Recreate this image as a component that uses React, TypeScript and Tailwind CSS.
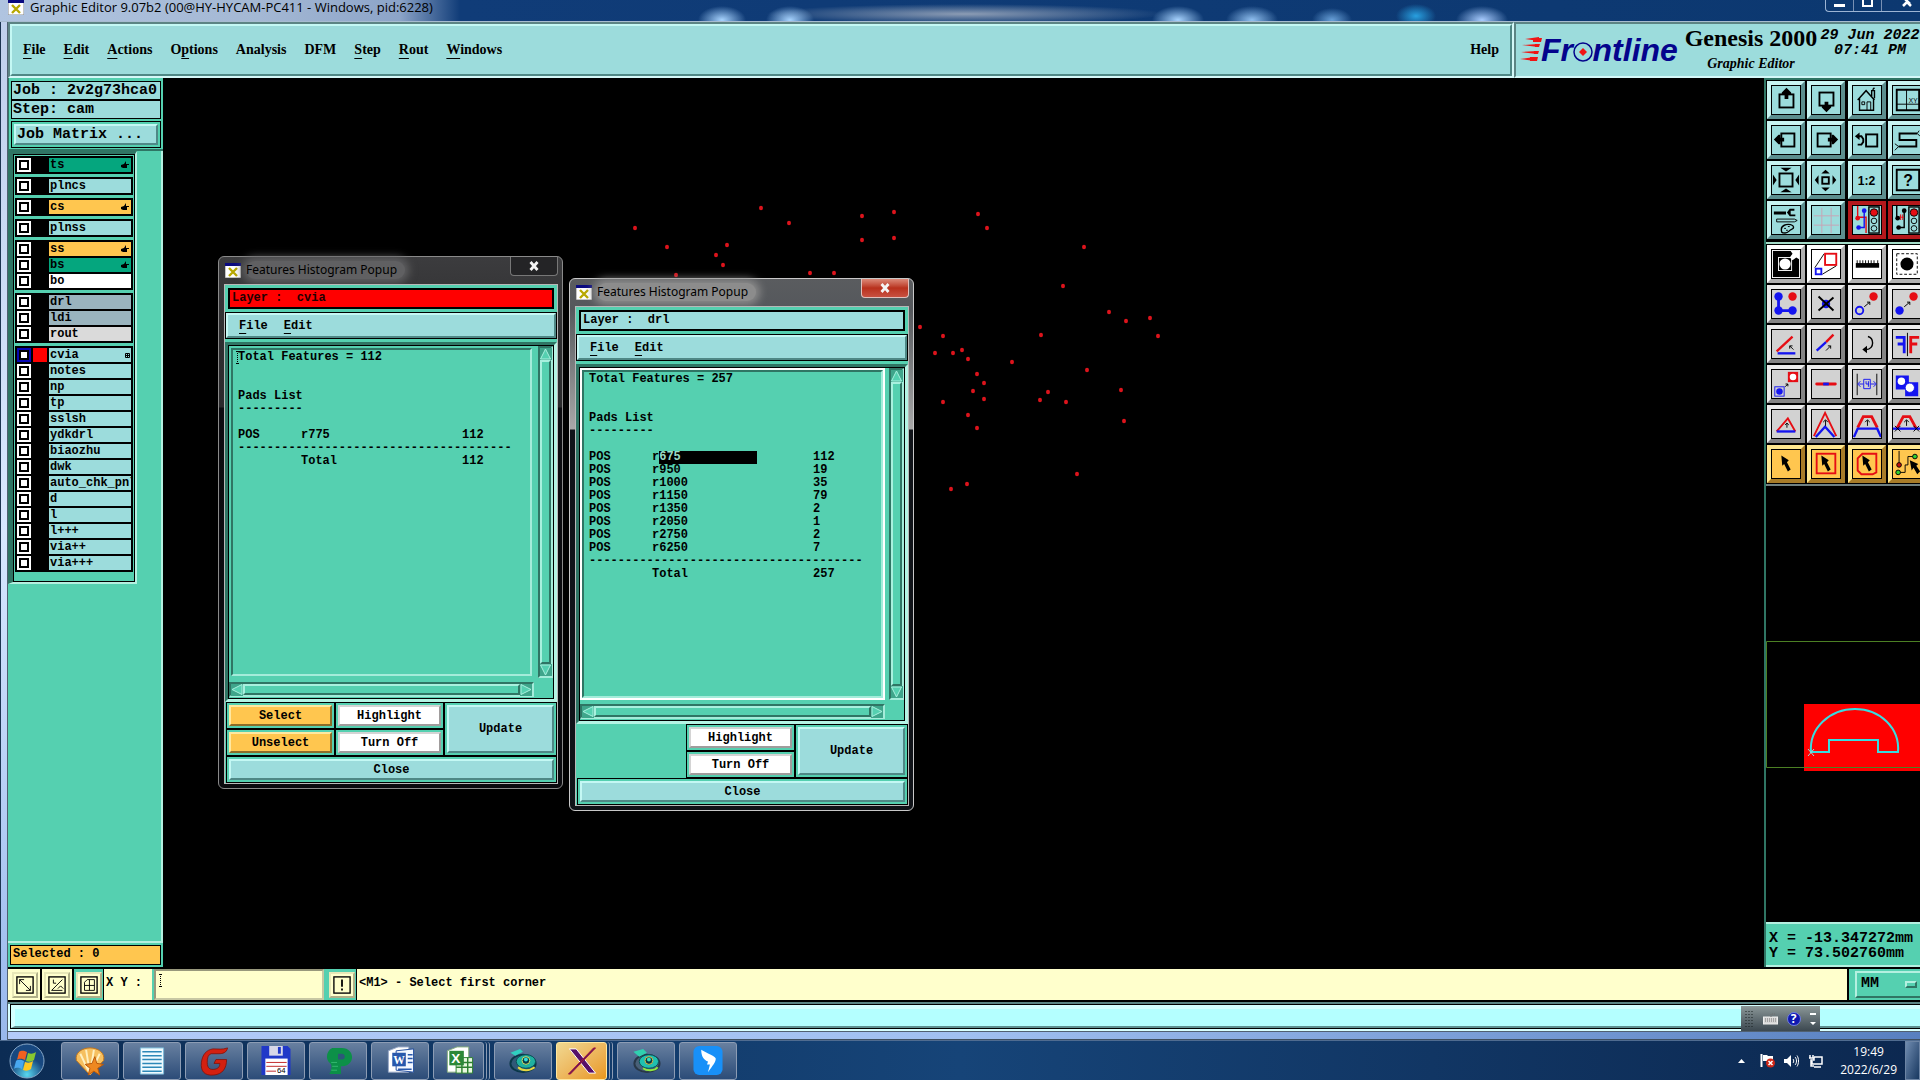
import React from 'react';

const menuItems = [
  { name: 'File', key: 0 },
  { name: 'Edit', key: 0 },
  { name: 'Actions', key: 0 },
  { name: 'Options', key: 1 },
  { name: 'Analysis', key: -1 },
  { name: 'DFM', key: -1 },
  { name: 'Step', key: 0 },
  { name: 'Rout', key: 0 },
  { name: 'Windows', key: 0 },
];

const cyan = 'bg-[#9cdcdc]';
const gold = 'bg-[#ffc64f]';
const green = 'bg-[#05a67e]';

const layerGroups = [
  [{ name: 'ts', color: green, hand: true }],
  [{ name: 'plncs', color: cyan }],
  [{ name: 'cs', color: gold, hand: true }],
  [{ name: 'plnss', color: cyan }],
  [
    { name: 'ss', color: gold, hand: true },
    { name: 'bs', color: green, hand: true },
    { name: 'bo', color: 'bg-white' },
  ],
  [
    { name: 'drl', color: 'bg-[#9ab4be]' },
    { name: 'ldi', color: 'bg-[#9ab4be]' },
    { name: 'rout', color: 'bg-[#dadada]' },
  ],
  [
    { name: 'cvia', color: cyan, active: true },
    { name: 'notes', color: cyan },
    { name: 'np', color: cyan },
    { name: 'tp', color: cyan },
    { name: 'sslsh', color: cyan },
    { name: 'ydkdrl', color: cyan },
    { name: 'biaozhu', color: cyan },
    { name: 'dwk', color: cyan },
    { name: 'auto_chk_pnl', color: cyan },
    { name: 'd', color: cyan },
    { name: 'l', color: cyan },
    { name: 'l+++', color: cyan },
    { name: 'via++', color: cyan },
    { name: 'via+++', color: cyan },
  ],
] as { name: string; color: string; hand?: boolean; active?: boolean }[][];

const pads = [
  [635, 228], [667, 247], [676, 275], [716, 255], [723, 265], [727, 245], [761, 208], [789, 223],
  [810, 273], [834, 273], [862, 216], [862, 240], [894, 212], [894, 238], [978, 214], [987, 228],
  [1084, 247], [1063, 286], [1109, 312], [1126, 321], [1150, 318], [1158, 336], [1041, 335],
  [1012, 362], [920, 327], [943, 336], [935, 353], [953, 353], [962, 350], [968, 359], [977, 374],
  [984, 383], [973, 391], [984, 399], [943, 402], [968, 415], [977, 428], [1087, 370], [1121, 390],
  [1048, 392], [1040, 400], [1066, 402], [1124, 421], [1077, 474], [967, 484], [951, 489],
];

const mono = "font-['Liberation_Mono',monospace]";
const serif = "font-['Liberation_Serif',serif]";
const raised = 'border-2 border-t-[#c4f8f4] border-l-[#c4f8f4] border-b-[#4f8886] border-r-[#4f8886]';

const Key: React.FC<{ text: string; at: number }> = ({ text, at }) =>
  at < 0 ? (
    <>{text}</>
  ) : (
    <>
      {text.slice(0, at)}
      <span className="underline decoration-1 underline-offset-4">{text[at]}</span>
      {text.slice(at + 1)}
    </>
  );

const AppIcon: React.FC = () => (
  <svg className="h-[15px] w-[16px] shrink-0" viewBox="0 0 16 15">
    <rect width="16" height="15" fill="#fff" stroke="#888" />
    <rect width="16" height="3" fill="#0a0a80" />
    <path d="M4 5l8 8M12 5l-8 8" stroke="#b8a800" strokeWidth="2.4" />
  </svg>
);

const Caret: React.FC<{ className: string }> = ({ className }) => (
  <svg className={`absolute h-[13px] w-[3px] ${className}`} viewBox="0 0 3 13">
    <path d="M1.500 0v13" stroke="#000" strokeDasharray="1 1" />
    <path d="M0 .500h3M0 12.500h3" stroke="#000" />
  </svg>
);

const RED = '#e60d14';
const BLUE = '#1414f0';

/* toolbar glyphs, all drawn on a 30x30 grid */
const viewTools: { label: string; art: React.ReactNode; alert?: boolean }[] = [
  {
    label: 'Pan up',
    art: (
      <>
        <rect x="8" y="9" width="15" height="14" fill="none" stroke="#000" strokeWidth="2" />
        <path d="M15.500 2l5 5v2h-3v5h-4v-5h-3v-2z" />
      </>
    ),
  },
  {
    label: 'Pan down',
    art: (
      <>
        <rect x="8" y="7" width="15" height="14" fill="none" stroke="#000" strokeWidth="2" />
        <path d="M15.500 28l-5-5v-2h3v-4h4v4h3v2z" />
      </>
    ),
  },
  {
    label: 'Home',
    art: (
      <g fill="none" stroke="#000" strokeWidth="1.500">
        <path d="M5 15L14 5l9 10M7 13v13h15V13M20 11V5h3v8M21 4l2-2" />
        <path d="M9.500 17h3v3h-3zM15 26v-9h4v9" strokeWidth="1" />
      </g>
    ),
  },
  {
    label: 'Coordinates',
    art: (
      <>
        <path d="M4 4h24v22H4z" fill="none" stroke="#000" strokeWidth="2" />
        <path d="M14.500 4v22M4 19.500h24" stroke="#000" />
        <text x="17" y="18" fontSize="7" fontFamily="Liberation Sans">XY</text>
      </>
    ),
  },
  {
    label: 'Pan left',
    art: (
      <>
        <rect x="10" y="8" width="14" height="14" fill="none" stroke="#000" strokeWidth="2" />
        <path d="M2 14.500l5-5h2v3h4v4h-4v3h-2z" />
      </>
    ),
  },
  {
    label: 'Pan right',
    art: (
      <>
        <rect x="6" y="8" width="14" height="14" fill="none" stroke="#000" strokeWidth="2" />
        <path d="M28 14.500l-5-5h-2v3h-4v4h4v3h2z" />
      </>
    ),
  },
  {
    label: 'Previous view',
    art: (
      <g fill="none" stroke="#000" strokeWidth="2">
        <rect x="14" y="9" width="12" height="13" />
        <path d="M5 11h4l2 3v3l-2 3H5" />
        <path d="M2 11l5-4v8z" fill="#000" stroke="none" />
      </g>
    ),
  },
  {
    label: 'Snake',
    art: (
      <g fill="none" stroke="#000" strokeWidth="2">
        <path d="M26 8H7v7h18v7H6" />
        <path d="M26 8l2-3M26 8l3 3M6 22l-4-3M6 22l-4 4" strokeWidth="1" />
      </g>
    ),
  },
  {
    label: 'Zoom in',
    art: (
      <>
        <rect x="8" y="8" width="14" height="14" fill="none" stroke="#000" strokeWidth="2" />
        <path d="M9 2h12l-6 4zM9 28h12l-6-4zM1 9v12l4-6zM29 9v12l-4-6z" />
      </>
    ),
  },
  {
    label: 'Zoom out',
    art: (
      <>
        <rect x="11" y="12" width="7" height="7" fill="none" stroke="#000" strokeWidth="2" />
        <path d="M10 8h9l-4.500-4zM10 23h9l-4.500 4zM7 10v10l-4-5zM22 10v10l4-5z" />
      </>
    ),
  },
  {
    label: 'Scale one to two',
    art: <text x="5" y="20" fontSize="13" fontFamily="Liberation Sans" fontWeight="bold">1:2</text>,
  },
  {
    label: 'Query',
    art: (
      <>
        <path d="M4 4h24v22H4z" fill="none" stroke="#000" strokeWidth="2" />
        <text x="11" y="21" fontSize="17" fontFamily="Liberation Sans" fontWeight="bold">?</text>
      </>
    ),
  },
  {
    label: 'Setup',
    art: (
      <>
        <path d="M2 6h13v3H2zM16 7l3-4h5v2h-4v4h5v2h-6z" />
        <path d="M5 14h19l3 1.500-3 1.500H5z" fill="none" stroke="#000" />
        <path d="M10 25c0-4 5-6 10-5 4 1 4 4 1 5s-3 4-7 4-4-1-4-4z" fill="none" stroke="#000" strokeWidth="1.500" />
        <path d="M13 24h2M17 22h2M15 26h2" stroke="#000" />
      </>
    ),
  },
  {
    label: 'Grid',
    art: <path d="M10.500 2v27M20.500 2v27M2 10.500h27M2 20.500h27" stroke="#c9a2b4" />,
  },
  {
    label: 'Nets on',
    alert: true,
    art: (
      <>
        <path d="M5 0v12h9v17" fill="none" stroke={RED} strokeWidth="1.500" />
        <path d="M12 5v18H6" fill="none" stroke={BLUE} strokeWidth="1.500" />
        <circle cx="5" cy="13" r="2.500" fill={RED} />
        <circle cx="12" cy="5" r="2.500" fill={BLUE} />
        <circle cx="6" cy="23" r="2.500" fill={BLUE} />
        <rect x="17" y="1" width="11" height="28" fill="none" stroke="#000" strokeWidth="1.500" />
        <circle cx="22.500" cy="7" r="4" fill={RED} stroke="#000" />
        <circle cx="22.500" cy="16" r="3" fill="none" stroke="#000" />
        <circle cx="22.500" cy="24" r="3" fill="none" stroke="#000" />
      </>
    ),
  },
  {
    label: 'Nets off',
    alert: true,
    art: (
      <>
        <path d="M4 0v12M12 5v18H6" fill="none" stroke="#000" strokeWidth="1.500" />
        <path d="M5 12h7M8 9v6M10 9v6" stroke={RED} />
        <circle cx="5" cy="13" r="2.500" />
        <circle cx="12" cy="5" r="2.500" />
        <circle cx="6" cy="23" r="2.500" />
        <rect x="17" y="1" width="11" height="28" fill="none" stroke="#000" strokeWidth="1.500" />
        <circle cx="22.500" cy="7" r="4" fill={RED} stroke="#000" />
        <circle cx="22.500" cy="16" r="3" fill="none" stroke="#000" />
        <circle cx="22.500" cy="24" r="3" fill="none" stroke="#000" />
      </>
    ),
  },
];

const arrowCursor = 'M10 6l8 5-2 2 4 8-3 2-4-8-2 2z';

const editTools: { label: string; art: React.ReactNode }[] = [
  {
    label: 'Zoom area',
    art: (
      <>
        <path d="M1 1h28v28H1z" />
        <rect x="7" y="8" width="14" height="14" fill="none" stroke="#fff" />
        <circle cx="14" cy="15" r="6" fill="#fff" />
        <path d="M19 8l3-4-2-3h9v9l-3-2-4 3z" fill="#fff" />
      </>
    ),
  },
  {
    label: 'Resize',
    art: (
      <>
        <path d="M3 19L13 4M11 26l15-9" stroke="#000" />
        <rect x="14" y="4" width="12" height="12" fill="none" stroke={RED} strokeWidth="2" />
        <rect x="4" y="20" width="6" height="6" fill="none" stroke={BLUE} strokeWidth="2" />
      </>
    ),
  },
  {
    label: 'Measure',
    art: (
      <>
        <path d="M3 14h25v5H3z" />
        <path d="M4.500 11v4M7.500 11v4M10.500 11v4M13.500 11v4M16.500 11v4M19.500 11v4M22.500 11v4M26.500 11v4" stroke="#000" strokeWidth="1" />
      </>
    ),
  },
  {
    label: 'Select feature',
    art: (
      <>
        <rect x="4" y="4" width="22" height="22" fill="none" stroke="#000" strokeDasharray="3 2" />
        <circle cx="15" cy="15" r="7" />
      </>
    ),
  },
  {
    label: 'Add',
    art: (
      <>
        <path d="M7 7v15h16" fill="none" stroke={BLUE} strokeWidth="3" />
        <circle cx="7" cy="7" r="4.500" fill={BLUE} />
        <circle cx="7" cy="22" r="4.500" fill={BLUE} />
        <circle cx="22" cy="22" r="4.500" fill={BLUE} />
        <circle cx="22" cy="7" r="4.500" fill={RED} />
      </>
    ),
  },
  {
    label: 'Delete',
    art: (
      <>
        <circle cx="15" cy="15" r="4.500" fill={BLUE} />
        <path d="M7 7l16 15M23 8L7 22" stroke="#000" strokeWidth="2" />
      </>
    ),
  },
  {
    label: 'Move',
    art: (
      <>
        <circle cx="22" cy="7" r="4.500" fill={RED} />
        <circle cx="7" cy="22" r="4" fill="none" stroke={BLUE} strokeWidth="2" />
        <path d="M12 18l6-5M15 13h3v3" fill="none" stroke="#000" />
      </>
    ),
  },
  {
    label: 'Copy',
    art: (
      <>
        <circle cx="22" cy="7" r="4.500" fill={RED} />
        <circle cx="7" cy="22" r="4.500" fill={BLUE} />
        <path d="M12 18l6-5M15 13h3v3" fill="none" stroke="#000" />
      </>
    ),
  },
  {
    label: 'Rotate',
    art: (
      <>
        <path d="M5 23L22 7" stroke={RED} strokeWidth="2.500" />
        <path d="M6 25h19" stroke={BLUE} strokeWidth="2.500" />
        <path d="M23 21l-4-4M19 20v-3h3" fill="none" stroke="#000" />
      </>
    ),
  },
  {
    label: 'Stretch',
    art: (
      <>
        <path d="M15 13l8-8" stroke={RED} strokeWidth="2.500" />
        <path d="M5 22l10-9" stroke={BLUE} strokeWidth="2.500" />
        <path d="M15 22l5-5M17 17h3v3" fill="none" stroke="#000" />
      </>
    ),
  },
  {
    label: 'Turn',
    art: (
      <>
        <path d="M16 7c4 1 5 4 5 7s-2 7-7 7" fill="none" stroke="#000" strokeWidth="1.500" />
        <path d="M10 21l5-4v8z" />
      </>
    ),
  },
  {
    label: 'Mirror',
    art: (
      <>
        <path d="M3 8h9v17M5 15h7" fill="none" stroke={BLUE} strokeWidth="3" />
        <path d="M28 8h-9v17M26 15h-7" fill="none" stroke={RED} strokeWidth="3" />
        <path d="M15.500 3v25" stroke="#000" />
      </>
    ),
  },
  {
    label: 'Substitute',
    art: (
      <>
        <rect x="17" y="2" width="11" height="11" fill={RED} />
        <circle cx="22.500" cy="7.500" r="3.500" fill="#fff" />
        <rect x="3" y="18" width="10" height="10" fill="none" stroke={BLUE} />
        <circle cx="8" cy="23" r="3.500" fill={BLUE} />
        <path d="M14 18l3-3M14.500 15H17v2.500" fill="none" stroke="#000" />
      </>
    ),
  },
  {
    label: 'Break',
    art: (
      <>
        <path d="M5 15h20" stroke={RED} strokeWidth="3" strokeLinecap="round" />
        <path d="M12 15h6" stroke={BLUE} strokeWidth="3" />
      </>
    ),
  },
  {
    label: 'Spacing',
    art: (
      <>
        <path d="M4.500 4v23M25.500 4v23" stroke="#000" />
        <path d="M11.500 10h7v10h-7zM6 15h5M19 15h5M8 12l-3 3 3 3M22 12l3 3-3 3" fill="none" stroke={BLUE} />
        <path d="M14 12v3h3M16.500 12v6" fill="none" stroke={BLUE} />
      </>
    ),
  },
  {
    label: 'Merge',
    art: (
      <>
        <path d="M3 6h14v7h10v15H13v-7H3z" fill={BLUE} />
        <circle cx="9" cy="12" r="4" fill="#fff" />
        <circle cx="18" cy="19" r="5" fill="#fff" stroke={BLUE} />
      </>
    ),
  },
  {
    label: 'Shift line',
    art: (
      <>
        <path d="M5 23L17 9l8 14" fill="none" stroke={RED} strokeWidth="2" />
        <path d="M5 23h20" stroke={BLUE} strokeWidth="2.500" />
        <path d="M16 19v-5M14 16l2-2 2 2" fill="none" stroke="#000" />
      </>
    ),
  },
  {
    label: 'Shift corner',
    art: (
      <>
        <path d="M2 28L14 3l12 25" fill="none" stroke={RED} strokeWidth="2" />
        <path d="M4 29l10-11 10 11" fill="none" stroke={BLUE} strokeWidth="2.500" />
        <path d="M14.500 17v-6M12 13l2.500-2.500 2.500 2.500" fill="none" stroke="#000" />
      </>
    ),
  },
  {
    label: 'Shift segment',
    art: (
      <>
        <path d="M5 19l6-12h9l6 12" fill="none" stroke={RED} strokeWidth="3" />
        <path d="M1 29l4-9h21l4 9" fill="none" stroke={BLUE} strokeWidth="2.500" />
        <path d="M15.500 17v-6M13 13l2.500-2.500 2.500 2.500" fill="none" stroke="#000" />
      </>
    ),
  },
  {
    label: 'Shift and cut',
    art: (
      <>
        <path d="M4 20l7-13h7l7 13" fill="none" stroke={RED} strokeWidth="3" />
        <path d="M0 20h30" stroke={BLUE} strokeWidth="2.500" />
        <path d="M2 17l6 6M8 17l-6 6M22 17l6 6M28 17l-6 6M14.500 17v-6M12 13l2.500-2.500 2.500 2.500" fill="none" stroke="#000" />
      </>
    ),
  },
];

const selectTools: { label: string; art: React.ReactNode }[] = [
  { label: 'Select', art: <path d={arrowCursor} /> },
  {
    label: 'Select in rectangle',
    art: (
      <>
        <rect x="5" y="4" width="20" height="21" fill="none" stroke={RED} strokeWidth="2" />
        <path d={arrowCursor} />
      </>
    ),
  },
  {
    label: 'Select in polygon',
    art: (
      <>
        <path d="M10 4h15v20l-4 2H9l-4-4V9z" fill="none" stroke={RED} strokeWidth="2" />
        <path d={arrowCursor} />
      </>
    ),
  },
  {
    label: 'Select net',
    art: (
      <>
        <path d="M6.500 1v15M6 24h7v-8h3V7h7" fill="none" stroke="#000" />
        <circle cx="6.500" cy="16" r="2.500" fill="#c01010" stroke="#000" />
        <circle cx="5.500" cy="24" r="2.500" fill="#30d030" stroke="#000" />
        <circle cx="23.500" cy="7" r="2.500" fill="#30d030" stroke="#000" />
        <path d="M18 11l9 4-2 2 4 6-3 3-4-7-2 3z" />
      </>
    ),
  },
];

const toolSkins = {
  cyan: 'bg-[#9cdcdc] border-t-[#c8f4f2] border-l-[#c8f4f2] border-b-[#5c8e8e] border-r-[#5c8e8e]',
  alert: 'bg-[#9cdcdc] border-[#b4181c]',
  white: 'bg-white border-t-white border-l-white border-b-[#b0b0b0] border-r-[#b0b0b0]',
  grey: 'bg-[#d2d2d2] border-t-[#ececec] border-l-[#ececec] border-b-[#848484] border-r-[#848484]',
  gold: 'bg-[#ffc64f] border-t-[#ffe890] border-l-[#ffe890] border-b-[#a87c28] border-r-[#a87c28]',
};

const ToolButton: React.FC<{ label: string; art: React.ReactNode; skin: keyof typeof toolSkins }> = ({ label, art, skin }) => (
  <button aria-label={label} className={`h-[38px] w-[38px] border-4 ${toolSkins[skin]}`}>
    <svg className="block h-[30px] w-[30px] border border-black" viewBox="0 0 30 30">
      {art}
    </svg>
  </button>
);

const LayerRow: React.FC<{ layer: { name: string; color: string; hand?: boolean; active?: boolean } }> = ({ layer }) => (
  <label className="flex h-[14px] gap-[2px]">
    <input
      type="checkbox"
      defaultChecked={layer.active}
      className={`h-[14px] w-[14px] shrink-0 appearance-none border-2 bg-white outline-2 -outline-offset-4 outline-black ${
        layer.active ? 'border-[#0808b4]' : 'border-white'
      }`}
    />
    <span className={`w-[14px] shrink-0 ${layer.active ? 'bg-[#ff0000]' : 'bg-black'}`} />
    <span className={`flex min-w-0 flex-1 items-center justify-between overflow-hidden pl-px ${layer.color}`}>
      <span className="text-[12px] leading-[14px]">{layer.name}</span>
      {layer.hand && (
        <svg className="mr-[2px] h-[8px] w-[8px] shrink-0" viewBox="0 0 8 8">
          <path d="M0 4l3-1 2-3v3h3v1H6v3H2L0 6z" />
        </svg>
      )}
      {layer.active && (
        <svg className="mr-px h-[5px] w-[5px] shrink-0" viewBox="0 0 5 5">
          <path d="M.500.500h4v4h-4zM2.500 0v5M0 2.500h5" fill="none" stroke="#000" />
        </svg>
      )}
    </span>
  </label>
);

const ScrollArrow: React.FC<{ label: string; d: string }> = ({ label, d }) => (
  <button aria-label={label} className="h-[12px] w-[12px] shrink-0">
    <svg className="block h-[12px] w-[12px]" viewBox="0 0 12 12">
      <rect width="12" height="12" fill="#3fa58b" />
      <path d={d} fill="#55d0b0" stroke="#a8f0de" />
    </svg>
  </button>
);

const PushButton: React.FC<{ skin: string; className?: string; children: React.ReactNode }> = ({ skin, className = '', children }) => (
  <div className={`flex border border-black bg-[#55d0b0] p-[2px] ${className}`}>
    <button className={`flex-1 border-2 ${skin}`}>{children}</button>
  </div>
);

const goldSkin = 'bg-[#ffc64f] border-t-[#ffe8a0] border-l-[#ffe8a0] border-b-[#8c6c28] border-r-[#8c6c28]';
const whiteSkin = 'bg-white border-t-[#d4d4d4] border-l-[#d4d4d4] border-b-[#a09c9c] border-r-[#a09c9c]';
const cyanSkin = 'bg-[#9cdcdc] border-t-[#c4f8f4] border-l-[#c4f8f4] border-b-[#4f8886] border-r-[#4f8886]';

interface HistogramProps {
  place: string;
  layer: string;
  total: number;
  rows: [string, number][];
  focused?: boolean;
}

const HistogramPopup: React.FC<HistogramProps> = ({ place, layer, total, rows, focused }) => (
  <section
    className={`absolute flex h-[533px] w-[345px] flex-col rounded-[6px] border pr-1 pb-1 pl-[5px] ${place} ${
      focused
        ? 'border-[#c8c8c8] bg-[linear-gradient(to_bottom,#5a5c5f_0,#55585c_30px,#a8a8a8_150px,#101318_151px,#101318_100%)]'
        : 'border-[#8a8a8a] bg-[linear-gradient(to_bottom,#3c3c3e_0,#2e2e30_80px,#2a2a2c_150px,#0c0c10_151px,#0a0a0e_100%)]'
    }`}
  >
    <header className="flex h-[27px] shrink-0 items-start justify-between">
      <div className="flex items-center gap-[5px] pt-[4px] pl-px">
        <AppIcon />
        <h2
          className={`rounded-full pr-2 font-['Noto_Sans',sans-serif] text-[12px] leading-[18px] font-normal text-black ${
            focused ? 'bg-[#8c8c8c] shadow-[0_0_8px_4px_#8c8c8c]' : 'bg-[#606062] shadow-[0_0_8px_4px_#606062]'
          }`}
        >
          Features Histogram Popup
        </h2>
      </div>
      <button
        aria-label="Close window"
        className={`flex h-[19px] w-[48px] items-center justify-center rounded-b-[4px] border border-t-0 ${
          focused ? 'border-[#e0c0bc] bg-linear-to-b from-[#dc8878] via-[#b8301c] to-[#c85040]' : 'border-[#777] bg-[#242426]'
        }`}
      >
        <svg className="h-[10px] w-[12px]" viewBox="0 0 12 10">
          <path d="M2.500 1l7 8M9.500 1l-7 8" stroke="#f4f4f4" strokeWidth="2.800" />
        </svg>
      </button>
    </header>

    <div className={`flex min-h-0 flex-1 flex-col border border-[#b8b8b8] bg-[#55d0b0] text-[12px] font-bold ${mono}`}>
      <div className="m-[3px] shrink-0">
        <p className={`h-[21px] border-2 border-black px-[2px] leading-[17px] whitespace-pre ${layer === 'cvia' ? 'bg-[#ff0000] text-[#200]' : 'bg-[#9cdcdc]'}`}>
          {`Layer :  ${layer}`}
        </p>
      </div>
      <div className="h-[27px] shrink-0 border border-black">
        <nav className={`flex h-full items-center gap-4 pl-[11px] ${raised} bg-[#9cdcdc]`}>
          <button><Key text="File" at={0} /></button>
          <button><Key text="Edit" at={0} /></button>
        </nav>
      </div>

      <div className="mt-[3px] flex min-h-0 flex-1 border-[3px] border-t-[#2f7564] border-r-[#b4f4e4] border-b-[#b4f4e4] border-l-[#2f7564]">
        <div className="flex flex-1 gap-1 border border-black">
          <div className="flex flex-1 flex-col">
            <div className={`flex min-h-0 flex-1 border-2 ${focused ? 'border-white' : 'border-[#55d0b0]'}`}>
              <div className="relative flex-1 border-2 border-t-[#2f7564] border-r-[#a4ecda] border-b-[#a4ecda] border-l-[#2f7564] pt-px pl-[5px] leading-[13px]">
                {!focused && <Caret className="top-px left-[3px]" />}
                <p>Total Features = {total}</p>
                <p className="mt-[26px]">Pads List</p>
                <p>---------</p>
                <table className="mt-[13px] w-full table-fixed border-collapse text-left">
                  <colgroup>
                    <col className="w-[63px]" />
                    <col className="w-[161px]" />
                    <col />
                  </colgroup>
                  <tbody>
                    {rows.map(([size, count], index) => (
                      <tr key={size}>
                        <td className="p-0">POS</td>
                        <td className="p-0">
                          {focused && index === 0 ? (
                            <span className="flex">
                              r<span className="w-[98px] bg-black text-[#9cdcc8]">{size}</span>
                            </span>
                          ) : (
                            `r${size}`
                          )}
                        </td>
                        <td className="p-0">{count}</td>
                      </tr>
                    ))}
                    <tr>
                      <td colSpan={3} className="p-0 whitespace-nowrap">--------------------------------------</td>
                    </tr>
                    <tr>
                      <td className="p-0" />
                      <td className="p-0">Total</td>
                      <td className="p-0">{total}</td>
                    </tr>
                  </tbody>
                </table>
              </div>
            </div>
            <div className="mt-1 mb-px flex h-[15px] border-2 border-t-[#2f7564] border-r-[#a4ecda] border-b-[#a4ecda] border-l-[#2f7564]">
              <ScrollArrow label="Scroll left" d="M11 .500v10L1 5.500z" />
              <div className="flex-1 border-2 border-t-[#a8f0de] border-r-[#2f7564] border-b-[#2f7564] border-l-[#a8f0de]" />
              <ScrollArrow label="Scroll right" d="M1 .500v10l10-5z" />
            </div>
          </div>
          <div className="mb-5 flex w-[15px] flex-col border-2 border-t-[#2f7564] border-r-[#a4ecda] border-b-[#a4ecda] border-l-[#2f7564]">
            <ScrollArrow label="Scroll up" d="M.500 11h10L5.500 1z" />
            <div className="flex-1 border-2 border-t-[#a8f0de] border-r-[#2f7564] border-b-[#2f7564] border-l-[#a8f0de]" />
            <ScrollArrow label="Scroll down" d="M.500 1h10l-5 10z" />
          </div>
        </div>
      </div>

      <div className="grid shrink-0 grid-cols-[109px_109px_1fr] grid-rows-[27px_27px_27px] pl-px">
        {!focused && <PushButton skin={goldSkin} className="col-start-1 row-start-1">Select</PushButton>}
        {!focused && <PushButton skin={goldSkin} className="col-start-1 row-start-2">Unselect</PushButton>}
        <PushButton skin={whiteSkin} className="col-start-2 row-start-1">Highlight</PushButton>
        <PushButton skin={whiteSkin} className="col-start-2 row-start-2">Turn Off</PushButton>
        <PushButton skin={cyanSkin} className="col-start-3 row-span-2 row-start-1">Update</PushButton>
        <PushButton skin={cyanSkin} className="col-span-3 row-start-3">Close</PushButton>
      </div>
    </div>
  </section>
);

const taskIcons: { label: string; art: React.ReactNode; active?: boolean; stacked?: boolean }[] = [
  {
    label: 'Shell',
    art: (
      <>
        <path d="M16 31L2 16C0 8 8 3 16 3s16 5 14 13z" fill="#f6c060" stroke="#c87818" />
        <path d="M16 30L6 9M16 30L12 5M16 30l4-25M16 30L26 9" stroke="#fff0c0" strokeWidth="2" />
        <path d="M21 12l2 7 7 1-6 4 2 7-6-4-6 4 2-7-5-4 7-1z" fill="#ee8820" stroke="#b85808" />
      </>
    ),
  },
  {
    label: 'Notes',
    art: (
      <>
        <path d="M4 3h24v27H4z" fill="#eefaff" stroke="#78b8d8" />
        <path d="M6 7h20M6 11h20M6 15h20M6 19h20M6 23h20M6 27h20" stroke="#2c88b8" strokeWidth="1.500" />
      </>
    ),
  },
  {
    label: 'Genesis',
    art: <path d="M30 3c-1 5-5 6-9 6h-8c-3 1-4 4-4 9 0 6 3 8 8 7 4-1 5-3 5-6h-6l2-4h11c0 9-4 15-13 16C6 32 2 27 3 18 4 10 8 5 15 4c6 0 9 1 15-1z" fill="#d42010" stroke="#801008" strokeWidth=".800" />,
  },
  {
    label: 'Save',
    art: (
      <>
        <path d="M1 1h27l3 3v27H1z" fill="#2038c8" />
        <path d="M9 1h14v10H9z" fill="#d8d8e8" />
        <path d="M18 2h3v7h-3z" fill="#2038c8" />
        <path d="M5 14h23v17H5z" fill="#fff" />
        <path d="M6 18h21M6 22h21M6 27h10" stroke="#c02828" />
        <text x="17" y="29" fontSize="8" fontFamily="Liberation Sans">64</text>
      </>
    ),
  },
  {
    label: 'Preview',
    art: (
      <>
        <path d="M10 3h10c14 0 14 19 0 19h-1v8H7c3-6 3-10 0-12-4-4-3-12 3-15z" fill="#0c9048" />
        <path d="M16 9h4c4 0 4 6 0 6h-4z" fill="#2c5878" />
        <path d="M9 18h6M10 22h6M9 26h6" stroke="#34b870" />
      </>
    ),
  },
  {
    label: 'Word',
    art: (
      <>
        <path d="M4 6l10-4h11v26H4z" fill="#fff" stroke="#98a8c8" />
        <path d="M12 6l18-2v24l-18-2z" fill="#f4f8ff" stroke="#2450a0" />
        <path d="M8 8h14v14H8z" fill="#2858ac" />
        <text x="9" y="20" fontSize="12" fontWeight="bold" fontFamily="Liberation Serif" fill="#fff">W</text>
        <path d="M24 10h5M24 14h5M24 18h5M14 25h14" stroke="#2858ac" strokeWidth="1.500" />
      </>
    ),
  },
  {
    label: 'Excel',
    stacked: true,
    art: (
      <>
        <path d="M4 6l10-4h12v26H4z" fill="#fff" stroke="#88b080" />
        <path d="M13 13h17v16H13z" fill="#e8f8e0" stroke="#2c8030" />
        <path d="M13 18h17M13 23h17M19 13v16M25 13v16" stroke="#2c8030" strokeWidth="1.500" />
        <path d="M6 6h15v15H6z" fill="#2c8838" />
        <text x="8" y="19" fontSize="14" fontWeight="bold" fontFamily="Liberation Sans" fill="#fff">X</text>
      </>
    ),
  },
  {
    label: 'Hardware monitor',
    art: (
      <>
        <ellipse cx="16" cy="19" rx="13" ry="9" fill="#305878" stroke="#0a3848" strokeWidth="2" />
        <ellipse cx="19" cy="17" rx="10" ry="7" fill="#20b0a0" stroke="#0a5058" />
        <circle cx="19" cy="16" r="4" fill="#083848" stroke="#d8e060" />
        <circle cx="19" cy="15" r="2" fill="#30e0e0" />
        <path d="M3 8l10-4 3 3-8 4z" fill="#30d0c0" />
        <path d="M11 23c4 4 12 4 17 0" fill="none" stroke="#e8d840" strokeWidth="2" />
      </>
    ),
  },
  {
    label: 'X server',
    active: true,
    stacked: true,
    art: (
      <>
        <path d="M3 4h7l20 25h-7z" fill="#581068" stroke="#fff" />
        <path d="M28 3h2L4 30H2z" fill="#581068" stroke="#a01838" />
      </>
    ),
  },
  {
    label: 'Hardware monitor 2',
    art: (
      <>
        <ellipse cx="17" cy="19" rx="13" ry="9" fill="#486078" stroke="#283848" strokeWidth="2" />
        <ellipse cx="19" cy="17" rx="10" ry="7" fill="#20c0b0" stroke="#0a5058" />
        <circle cx="19" cy="16" r="4" fill="#083848" stroke="#e0b840" />
        <circle cx="19" cy="15" r="2" fill="#30e0c0" />
        <path d="M3 7l10-3 4 4-8 4z" fill="#30d0b0" />
        <path d="M13 24c4 3 12 3 15-1" fill="none" stroke="#90e840" strokeWidth="2" />
      </>
    ),
  },
  {
    label: 'DingTalk',
    art: (
      <>
        <rect x="1" y="1" width="30" height="30" rx="6" fill="#1890f8" />
        <path d="M9 5c6 4 14 6 15 9 0 4-3 7-8 14l2-8h-3l1-3c-4-1-7-5-7-12z" fill="#fff" />
      </>
    ),
  },
];

const StatusIcon: React.FC<{ label: string; pressed?: boolean; children: React.ReactNode }> = ({ label, pressed, children }) => (
  <div className={`flex items-center justify-center border-black ${pressed ? 'w-[30px] border-r bg-[#55d0b0]' : 'w-[32px] border-r-2 bg-[#ffffcc]'}`}>
    <button aria-label={label} className="border-2 border-t-[#e8e8b8] border-r-[#b0b088] border-b-[#b0b088] border-l-[#e8e8b8] bg-[#ffffcc] p-[2px]">
      <svg className="block h-[18px] w-[18px]" viewBox="0 0 20 20" fill="none" stroke="#000">
        <rect x="1" y="1" width="18" height="18" strokeWidth="1.500" />
        {children}
      </svg>
    </button>
  </div>
);

const App: React.FC = () => {
  return (
    <div className="relative flex h-screen flex-col overflow-hidden bg-black text-black">
      <header className="flex h-[22px] shrink-0 items-start justify-between overflow-hidden border-b border-[#a8bcd0] bg-[radial-gradient(ellipse_24px_14px_at_722px_20px,#a8d4ff,transparent),radial-gradient(ellipse_24px_14px_at_790px_20px,#a8d4ff,transparent),radial-gradient(ellipse_200px_10px_at_965px_14px,#8c9cb4,transparent),radial-gradient(ellipse_26px_14px_at_1178px_20px,#a8d4ff,transparent),radial-gradient(ellipse_26px_14px_at_1252px_20px,#90c0f0,transparent),radial-gradient(ellipse_20px_12px_at_1332px_20px,#68a0d8,transparent),radial-gradient(ellipse_20px_12px_at_1416px_16px,#28a0e0,transparent),radial-gradient(ellipse_26px_14px_at_1482px_20px,#a8ccff,transparent),linear-gradient(to_right,#b0c4e0_0,#a4b8d4_260px,#8ca4c8_400px,#103c78_460px,#0c3870_100%)] pl-2">
        <div className="flex h-[14px] items-center gap-[6px]">
          <AppIcon />
          <h1 className="font-['Open_Sans',sans-serif] text-[13px] leading-[14px] font-normal">
            Graphic Editor 9.07b2 (00@HY-HYCAM-PC411 - Windows, pid:6228)
          </h1>
        </div>
        <div className="flex h-[12px] w-[95px] shrink-0 rounded-bl-[4px] border-b border-l border-[#9cb4d4]">
          <button aria-label="Minimize" className="flex w-[28px] justify-center border-r border-[#7890b4]">
            <span className="mt-1 h-[3px] w-[11px] bg-white" />
          </button>
          <button aria-label="Restore" className="flex w-[28px] justify-center border-r border-[#7890b4]">
            <span className="h-[7px] w-[11px] border-2 border-t-0 border-white" />
          </button>
          <button aria-label="Close" className="flex flex-1 justify-center pl-3">
            <svg className="h-[7px] w-[12px]" viewBox="0 0 12 7">
              <path d="M2 6l4-4 4 4M3-2l6 6" fill="none" stroke="#fff" strokeWidth="2.500" />
            </svg>
          </button>
        </div>
      </header>

      <div className="flex min-h-0 flex-1">
        <div className="w-2 shrink-0 border-r border-l border-r-[#506070] border-l-[#1c3450] bg-linear-to-b from-[#c0d0ec] via-[#d8e8ff] to-[#98b8ec]" />
        <div className="flex min-w-0 flex-1 flex-col">
          <div className="flex h-[56px] shrink-0">
            <nav className="flex flex-1 border-2 border-t-[#5c8484] border-r-[#d4f8f8] border-b-[#d4f8f8] border-l-[#5c8484]">
              <div className={`flex flex-1 items-center gap-[18px] bg-[#9cdcdc] px-[11px] pb-px text-[14px] font-bold ${serif} ${raised}`}>
                {menuItems.map((item) => (
                  <button key={item.name}><Key text={item.name} at={item.key} /></button>
                ))}
                <button className="ml-auto">Help</button>
              </div>
            </nav>
            <div className="flex w-[406px] shrink-0 border-t-2 border-b-2 border-l-2 border-t-[#5c8484] border-b-[#d4f8f8] border-l-[#5c8484] bg-[#9cdcdc]">
              <svg className="h-[50px] w-[166px] shrink-0" viewBox="0 0 166 50">
                <g fill="#f01414">
                  <path d="M9 15l14-2v4zM6 21l16-1v3zM5 28l16-1v3zM4 35l14-2v4z" />
                  <path d="M17 14h9l-1 4h-8zM19 20h5l-1 3h-4zM18 27h5l-1 3h-4zM14 33h8l-1 4h-7z" />
                </g>
                <text x="25" y="37" fontSize="32" fontWeight="bold" fontStyle="italic" fontFamily="Liberation Sans" fill="#04048c">
                  Fr<tspan fill="#9cdcdc">o</tspan>ntline
                </text>
                <circle cx="67" cy="28" r="9" fill="#9cdcdc" stroke="#04048c" strokeWidth="1.500" />
                <path d="M67 24l4 4-4 4-4-4z" fill="#f01414" />
              </svg>
              <div className={`flex w-[138px] shrink-0 flex-col items-center font-bold ${serif}`}>
                <p className="text-[24px] leading-[28px] whitespace-nowrap">Genesis 2000</p>
                <p className="mt-[2px] text-[14px] leading-[20px] italic">Graphic Editor</p>
              </div>
              <p className={`w-[100px] shrink-0 pt-[4px] text-center text-[15px] leading-[15px] font-bold whitespace-nowrap italic ${mono}`}>
                29 Jun 2022
                <br />
                07:41 PM
              </p>
            </div>
          </div>

          <div className="flex min-h-0 flex-1">
            <aside className={`flex w-[155px] shrink-0 flex-col bg-[#55d0b0] font-bold ${mono}`}>
              <div className="border-b-2 border-b-[#2f7564] border-l border-l-[#2f7564] px-[2px] pt-[3px] pb-px text-[15px]">
                <p className="h-[19px] border border-black bg-[#9cdcdc] pl-px leading-[17px] whitespace-nowrap">Job : 2v2g73hca0</p>
                <p className="h-[19px] border border-black bg-[#9cdcdc] pl-px leading-[17px]">Step: cam</p>
                <div className="mt-[2px] border border-black p-[2px]">
                  <button className={`block h-[21px] w-full bg-[#9cdcdc] pl-px text-left leading-[17px] ${raised}`}>Job Matrix ...</button>
                </div>
              </div>
              <div className="flex flex-1 flex-col border-r-2 border-b-2 border-[#b4f0e0]">
                <div className="w-[129px] border-t-[3px] border-r-2 border-b-2 border-l-[5px] border-t-[#2f7564] border-r-[#b4f0e0] border-b-[#b4f0e0] border-l-[#2f7564]">
                  <div className="flex flex-col gap-[3px] border border-black px-px pt-px pb-[9px]">
                    {layerGroups.map((group) => (
                      <div key={group[0].name} className="flex flex-col gap-[2px] bg-black p-[2px]">
                        {group.map((layer) => (
                          <LayerRow key={layer.name} layer={layer} />
                        ))}
                      </div>
                    ))}
                  </div>
                </div>
              </div>
              <p className="mx-[2px] my-[2px] h-[20px] border border-black bg-[#ffc64f] pl-[2px] text-[12px] leading-[17px]">Selected : 0</p>
            </aside>

            <main className="relative min-w-0 flex-1 overflow-hidden">
              <svg className="absolute inset-0 h-full w-full">
                <g transform="translate(-163 -78)" fill="#dc141c">
                  {pads.map(([x, y]) => (
                    <ellipse key={`${x}-${y}`} cx={x} cy={y} rx="2" ry="2.300" />
                  ))}
                </g>
              </svg>
            </main>

            <aside className="flex w-[156px] shrink-0 flex-col overflow-hidden border-l-2 border-[#2f7564]">
              <div className="grid w-[160px] grid-cols-4 gap-[2px] border-t-2 border-[#2f7564] bg-black pt-px pl-px">
                {viewTools.map((tool) => (
                  <ToolButton key={tool.label} label={tool.label} art={tool.art} skin={tool.alert ? 'alert' : 'cyan'} />
                ))}
              </div>
              <div className="mt-[3px] grid w-[160px] grid-cols-4 gap-[2px] border-t-2 border-b-2 border-t-[#a4dcc8] border-b-[#708080] bg-black pt-px pb-px pl-px">
                {editTools.map((tool, index) => (
                  <ToolButton key={tool.label} label={tool.label} art={tool.art} skin={index < 4 ? 'white' : 'grey'} />
                ))}
                {selectTools.map((tool) => (
                  <ToolButton key={tool.label} label={tool.label} art={tool.art} skin="gold" />
                ))}
              </div>
              <svg className="mt-[155px] h-[132px] w-full shrink-0" viewBox="0 0 154 132">
                <rect x="38" y="63" width="120" height="67" fill="#ff0000" />
                <path d="M160 .500H.500v126H160" fill="none" stroke="#4c8024" />
                <path d="M45 111h18V99h49v12h20c2-24-18-43-43-43s-46 19-44 43z" fill="none" stroke="#38dce0" strokeWidth="2" />
                <path d="M42 108l6 7M48 108l-6 7" stroke="#a0d8d8" />
              </svg>
              <p className={`mt-auto h-[45px] w-[160px] border-t-2 border-b-2 border-[#b4f0e0] bg-[#55d0b0] pt-[7px] pl-[3px] text-[15px] leading-[15px] font-bold whitespace-nowrap ${mono}`}>
                X = -13.347272mm
                <br />
                Y = 73.502760mm
              </p>
            </aside>
          </div>

          <div className={`flex h-[35px] shrink-0 border-t-2 border-b-2 border-black bg-[#ffffcc] pl-[2px] text-[12px] font-bold ${mono}`}>
            <StatusIcon label="Snap to point">
              <path d="M4 4l12 12M4 9V4h5M16 11v5h-5" />
            </StatusIcon>
            <StatusIcon label="Snap angle">
              <path d="M4 16L16 4M4 16h12M6 4v4h3M11 14l3-3 3 3" />
            </StatusIcon>
            <StatusIcon label="Snap grid" pressed>
              <path d="M5 7l3-3h8v12H5zM10.500 4v12M5 10.500h11" />
            </StatusIcon>
            <label htmlFor="xy" className="w-[48px] pl-[2px] leading-[29px] whitespace-nowrap">X Y :</label>
            <div className="relative border-r-[3px] border-l-2 border-[#55d0b0]">
              <input
                id="xy"
                className="block h-[31px] w-[170px] border-2 border-t-[#98987c] border-r-[#c8c8a4] border-b-[#c8c8a4] border-l-[#98987c] bg-[#ffffcc] px-1 outline-none"
              />
              <Caret className="top-[5px] left-[5px]" />
            </div>
            <StatusIcon label="Alert" pressed>
              <path d="M10 4v8M10 14v2" strokeWidth="2" />
            </StatusIcon>
            <p className="flex-1 pl-[2px] leading-[29px]">&lt;M1&gt; - Select first corner</p>
            <div className="relative w-[73px] shrink-0 border-l-2 border-black bg-[#55d0b0] py-[2px] pl-[6px]">
              <select
                aria-label="Units"
                className="block h-[27px] w-[80px] appearance-none border-2 border-t-[#b4f0e0] border-r-[#2f7564] border-b-[#2f7564] border-l-[#b4f0e0] pl-1 text-[15px]"
              >
                <option>MM</option>
                <option>INCH</option>
              </select>
              <span className="absolute top-[12px] right-[3px] h-[7px] w-[12px] border-2 border-t-[#b4f0e0] border-r-[#2f7564] border-b-[#2f7564] border-l-[#b4f0e0]" />
            </div>
          </div>

          <div className="relative flex h-[30px] shrink-0 border-t-2 border-b border-t-[#5c8484] border-b-[#506070] bg-[#d8ffff] pb-[2px] pl-[2px]">
            <div className="flex-1 border border-r-0 border-black bg-[#b4ffff]">
              <div className="h-full border-t-4 border-b-2 border-l-4 border-t-[#d4ffff] border-b-[#5f9090] border-l-[#d4ffff]" />
            </div>
            <div className="absolute top-[2px] right-[100px] flex h-[25px] w-[79px] items-center justify-between bg-linear-to-b from-[#8c9899] to-[#3c4850] px-1">
              <svg className="h-[18px] w-[10px]" viewBox="0 0 10 18">
                <path d="M1 1v17M4 1v17M7 1v17" stroke="#182020" strokeDasharray="1 2" />
              </svg>
              <svg className="h-[12px] w-[15px]" viewBox="0 0 15 12">
                <rect x=".500" y="4" width="14" height="7" fill="#d8d8d8" stroke="#eee" />
                <path d="M2 6h11M2 8h11M8 4V1h5" fill="none" stroke="#707070" strokeDasharray="1 1" />
              </svg>
              <span className="flex h-[14px] w-[14px] items-center justify-center rounded-full border border-[#7080e0] bg-[#1018b0] font-['Open_Sans',sans-serif] text-[12px] leading-[12px] font-bold text-white">?</span>
              <svg className="h-[14px] w-[7px]" viewBox="0 0 7 14">
                <path d="M1 1h6v2H1zM1 10h6l-3 3z" fill="#fff" />
              </svg>
            </div>
          </div>
          <div className="h-[8px] shrink-0 border-b border-[#405060] bg-linear-to-r from-[#b4ccf8] via-[#a0c0f0] to-[#5880c0]" />
        </div>
      </div>

      <HistogramPopup place="top-[256px] left-[218px]" layer="cvia" total={112} rows={[['775', 112]]} />
      <HistogramPopup
        place="top-[278px] left-[569px]"
        layer="drl"
        total={257}
        focused
        rows={[['675', 112], ['950', 19], ['1000', 35], ['1150', 79], ['1350', 2], ['2050', 1], ['2750', 2], ['6250', 7]]}
      />

      <footer className="flex h-[40px] shrink-0 items-center border-t border-[#506c90] bg-linear-to-r from-[#0c2c54] via-[#164478] to-[#0c2850] font-['Open_Sans',sans-serif] text-white">
        <button aria-label="Start" className="mr-[16px] ml-[9px] h-[36px] w-[36px] shrink-0">
          <svg viewBox="0 0 36 36">
            <defs>
              <radialGradient id="orb" cx="50%" cy="90%">
                <stop offset="0" stopColor="#58d8f0" />
                <stop offset="1" stopColor="#184880" />
              </radialGradient>
            </defs>
            <circle cx="18" cy="18" r="17" fill="url(#orb)" stroke="#88a8c8" />
            <path d="M10 9c3-2 5-1 8 0l-2 8c-3-1-5-2-8 0z" fill="#f06020" />
            <path d="M19 10c3 1 5 1 8-1l-2 8c-3 2-5 2-8 1z" fill="#88c830" />
            <path d="M7 18c3-2 5-1 8 0l-2 8c-3-1-5-2-8 0z" fill="#48a8f0" />
            <path d="M16 19c3 1 5 1 8-1l-2 8c-3 2-5 2-8 1z" fill="#ffc820" />
          </svg>
        </button>
        <nav className="flex items-center gap-1">
          {taskIcons.map((task) => (
            <div key={task.label} className="flex">
              <button
                aria-label={task.label}
                className={`flex h-[38px] items-center justify-center rounded-[3px] border ${task.stacked ? 'w-[51px]' : 'w-[58px]'} ${
                  task.active ? 'border-[#ffe8a0] bg-linear-to-br from-[#f0d890] to-[#e89818]' : 'border-[#8c9cb4] bg-linear-to-b from-[#6880a0] to-[#2c4c78]'
                }`}
              >
                <svg className="h-[31px] w-[32px]" viewBox="0 0 32 32">{task.art}</svg>
              </button>
              {task.stacked && <span className="h-[38px] w-[3px] rounded-r-[3px] border-r border-[#8c9cb4]" />}
              {task.stacked && <span className="h-[38px] w-[3px] rounded-r-[3px] border-r border-[#8c9cb4]" />}
            </div>
          ))}
        </nav>
        <div className="ml-auto flex h-full items-center">
          <svg className="mr-[15px] h-[4px] w-[7px]" viewBox="0 0 7 4">
            <path d="M0 4l3.500-4L7 4z" fill="#fff" />
          </svg>
          <svg className="mr-[9px] h-[15px] w-[15px]" viewBox="0 0 15 15">
            <path d="M1.500 1v13" stroke="#fff" strokeWidth="2" />
            <path d="M3 2h4l1 1h5v6H8L7 8H3z" fill="#fff" />
            <circle cx="10.500" cy="10" r="4.500" fill="#d02818" />
            <path d="M8.500 8l4 4M12.500 8l-4 4" stroke="#fff" strokeWidth="1.500" />
          </svg>
          <svg className="mr-[9px] h-[14px] w-[15px]" viewBox="0 0 15 14" fill="none" stroke="#fff">
            <path d="M0 5h3l4-4v12L3 9H0z" fill="#fff" stroke="none" />
            <path d="M9 5c1 1 1 3 0 4M11 3c2 2 2 6 0 8M13 1.500c2 3 2 8 0 11" />
          </svg>
          <svg className="mr-[17px] h-[14px] w-[15px]" viewBox="0 0 15 14" fill="none" stroke="#fff" strokeWidth="1.500">
            <path d="M6 3h8v7H4V7M6 13h7M2 1v3M5 1v3M1 4h5v2H3v6h3" />
          </svg>
          <p className="mr-[8px] text-center text-[12px] leading-[18px]">
            19:49
            <br />
            2022/6/29
          </p>
          <button aria-label="Show desktop" className="h-full w-[15px] border border-[#6c84a4] bg-linear-to-br from-[#708cb0] to-[#183860]" />
        </div>
      </footer>
    </div>
  );
};

export default App;
